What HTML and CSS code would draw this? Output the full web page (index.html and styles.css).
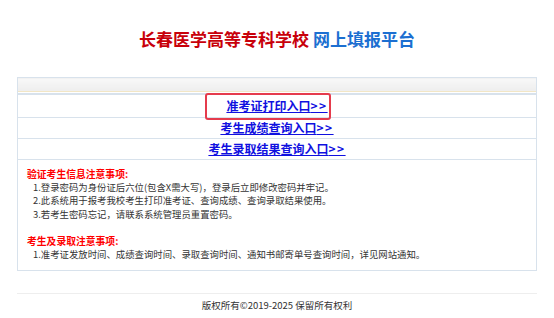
FILE: index.html
```html
<!DOCTYPE html>
<html lang="zh-CN">
<head>
    <meta charset="UTF-8">
    <meta name="viewport" content="width=device-width, initial-scale=1.0">
    <title>长春医学高等专科学校 网上填报平台</title>
    <link rel="stylesheet" href="styles.css">
</head>
<body>
    <div class="page">
        <h1 class="title"><span class="school">长春医学高等专科学校</span> <span class="platform">网上填报平台</span></h1>

        <table class="entry-table">
            <tr>
                <th class="table-head"></th>
            </tr>
            <tr>
                <td class="entry first">
                    <div class="entry-inner">
                        <a href="#">准考证打印入口<span class="arrows">&gt;&gt;</span></a>
                        <span class="mark"></span>
                    </div>
                </td>
            </tr>
            <tr>
                <td class="entry"><a href="#">考生成绩查询入口<span class="arrows">&gt;&gt;</span></a></td>
            </tr>
            <tr>
                <td class="entry"><a href="#">考生录取结果查询入口<span class="arrows">&gt;&gt;</span></a></td>
            </tr>
            <tr>
                <td class="notice">
                    <p class="notice-title">验证考生信息注意事项:</p>
                    <p class="notice-line">1.登录密码为身份证后六位(包含X需大写)，登录后立即修改密码并牢记。</p>
                    <p class="notice-line">2.此系统用于报考我校考生打印准考证、查询成绩、查询录取结果使用。</p>
                    <p class="notice-line">3.若考生密码忘记，请联系系统管理员重置密码。</p>
                    <p class="notice-title gap">考生及录取注意事项:</p>
                    <p class="notice-line">1.准考证发放时间、成绩查询时间、录取查询时间、通知书邮寄单号查询时间，详见网站通知。</p>
                </td>
            </tr>
        </table>

        <div class="footer">版权所有©2019-2025 保留所有权利</div>
    </div>
</body>
</html>
```

FILE: styles.css
```css
body {
    margin: 0;
    padding: 0;
    background-color: white;
    color: #333;
    font-family: "Noto Sans CJK SC", "Noto Sans", sans-serif;
}

.page {
    width: 520px;
    margin: 0 auto;
}

.title {
    margin: 0;
    padding-top: 29px;
    height: 20px;
    margin-bottom: 28px;
    font-size: 17px;
    line-height: 20px;
    text-align: center;
    font-weight: bold;
}

.school {
    color: #c8000a;
}

.platform {
    color: #1c6fd1;
}

.entry-table {
    width: 100%;
    border-collapse: collapse;
    border: 1px solid #d8e2ec;
}

.table-head {
    height: 15px;
    padding: 0;
    background: linear-gradient(#f8f8f8, #ececec);
    box-shadow: inset 0 -1px 0 white, inset 0 -2px 0 #f2e6c6;
    border-bottom: 2px solid #d8e2ec;
}

.entry {
    height: 20px;
    padding: 0;
    text-align: center;
    border-bottom: 1px solid #d8e2ec;
    font-size: 12px;
    line-height: 20px;
}

.entry.first {
    height: 22px;
}

.entry a {
    color: #1010e0;
    font-weight: bold;
    text-decoration: underline;
}

.arrows {
    letter-spacing: 1.5px;
}

.entry-inner {
    position: relative;
}

.mark {
    position: absolute;
    left: 187px;
    top: -3px;
    width: 122px;
    height: 23px;
    border: 2px solid #e53b4c;
    border-radius: 3px;
}

.notice {
    padding: 8px 9px 9px;
    font-size: 9.4px;
    line-height: 13.2px;
    color: #333;
}

.notice p {
    margin: 0;
}

.notice-title {
    color: #f00;
    font-weight: bold;
    font-size: 9.8px;
}

.notice-title.gap {
    margin-top: 14px !important;
}

.notice-line {
    padding-left: 6px;
}

.footer {
    margin-top: 22px;
    border-top: 1px solid #eee;
    padding-top: 5px;
    text-align: center;
    font-size: 9.5px;
    line-height: 13px;
    color: #333;
}
```
